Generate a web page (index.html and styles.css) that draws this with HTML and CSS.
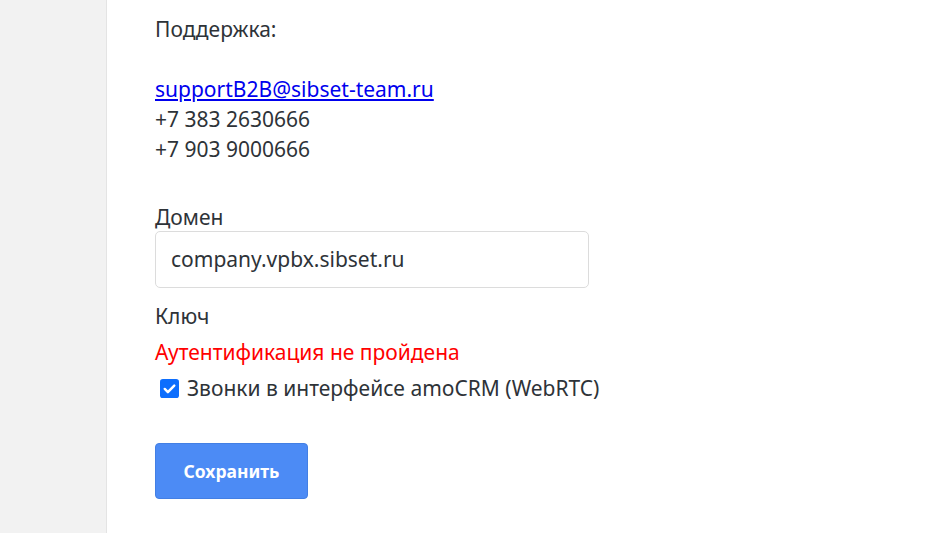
FILE: index.html
```html
<!DOCTYPE html>
<html lang="ru">
<head>
<meta charset="utf-8">
<link rel="stylesheet" href="styles.css">
</head>
<body>
<div class="layout">
  <aside class="sidebar"></aside>
  <main class="content">
    <div class="support">
      Поддержка:<br><br>
      <a href="#">supportB2B@sibset-team.ru</a><br>
      +7 383 2630666<br>
      +7 903 9000666
    </div>
    <div class="field">
      <label class="label">Домен</label>
      <div class="input">company.vpbx.sibset.ru</div>
    </div>
    <div class="label key">Ключ</div>
    <div class="error">Аутентификация не пройдена</div>
    <label class="check">
      <span class="box"><svg viewBox="0 0 20 20" width="20" height="20"><rect x="0" y="0" width="20" height="20" rx="3" fill="#0d6efd"/><path d="M5 10.5l3.3 3.3L15 7" fill="none" stroke="#fff" stroke-width="2.6" stroke-linecap="round" stroke-linejoin="round"/></svg></span>
      <span>Звонки в интерфейсе amoCRM (WebRTC)</span>
    </label>
    <button class="btn">Сохранить</button>
  </main>
</div>
</body>
</html>
```
FILE: styles.css
```css
html, body {
  margin: 0;
  padding: 0;
  background: #fff;
  height: 100%;
}
body {
  font-family: "Noto Sans", "Open Sans", sans-serif;
  font-size: 21px;
  color: #2e3338;
}
.layout {
  display: flex;
  min-height: 533px;
}
.sidebar {
  width: 106px;
  flex: 0 0 106px;
  background: #f2f2f2;
  border-right: 1px solid #e4e4e4;
}
.content {
  padding: 14px 0 0 48px;
  display: flex;
  flex-direction: column;
  align-items: flex-start;
}
.support {
  line-height: 30px;
}
.support a {
  color: #0000ee;
}
.field {
  margin-top: 41px;
  display: flex;
  flex-direction: column;
}
.label {
  line-height: 24px;
  margin-bottom: 2px;
}
.input {
  height: 55px;
  border: 1px solid #dcdcdc;
  border-radius: 5px;
  box-sizing: content-box;
  padding: 0 0 0 15px;
  width: 417px;
  line-height: 55px;
}
.key {
  margin-top: 16px;
  margin-bottom: 0;
}
.error {
  color: #ff0000;
  line-height: 24px;
  margin-top: 12px;
}
.check {
  display: flex;
  align-items: center;
  gap: 8px;
  margin-top: 11px;
  margin-left: 5px;
  line-height: 26px;
}
.box {
  width: 19px;
  height: 19px;
  display: flex;
}
.box svg {
  width: 19px;
  height: 19px;
}
.btn {
  margin-top: 42px;
  width: 153px;
  height: 56px;
  background: #4c8bf5;
  border: 1px solid #437fe4;
  border-radius: 4px;
  color: #fff;
  font-family: "Noto Sans", sans-serif;
  font-weight: 700;
  font-size: 17.5px;
}
```
